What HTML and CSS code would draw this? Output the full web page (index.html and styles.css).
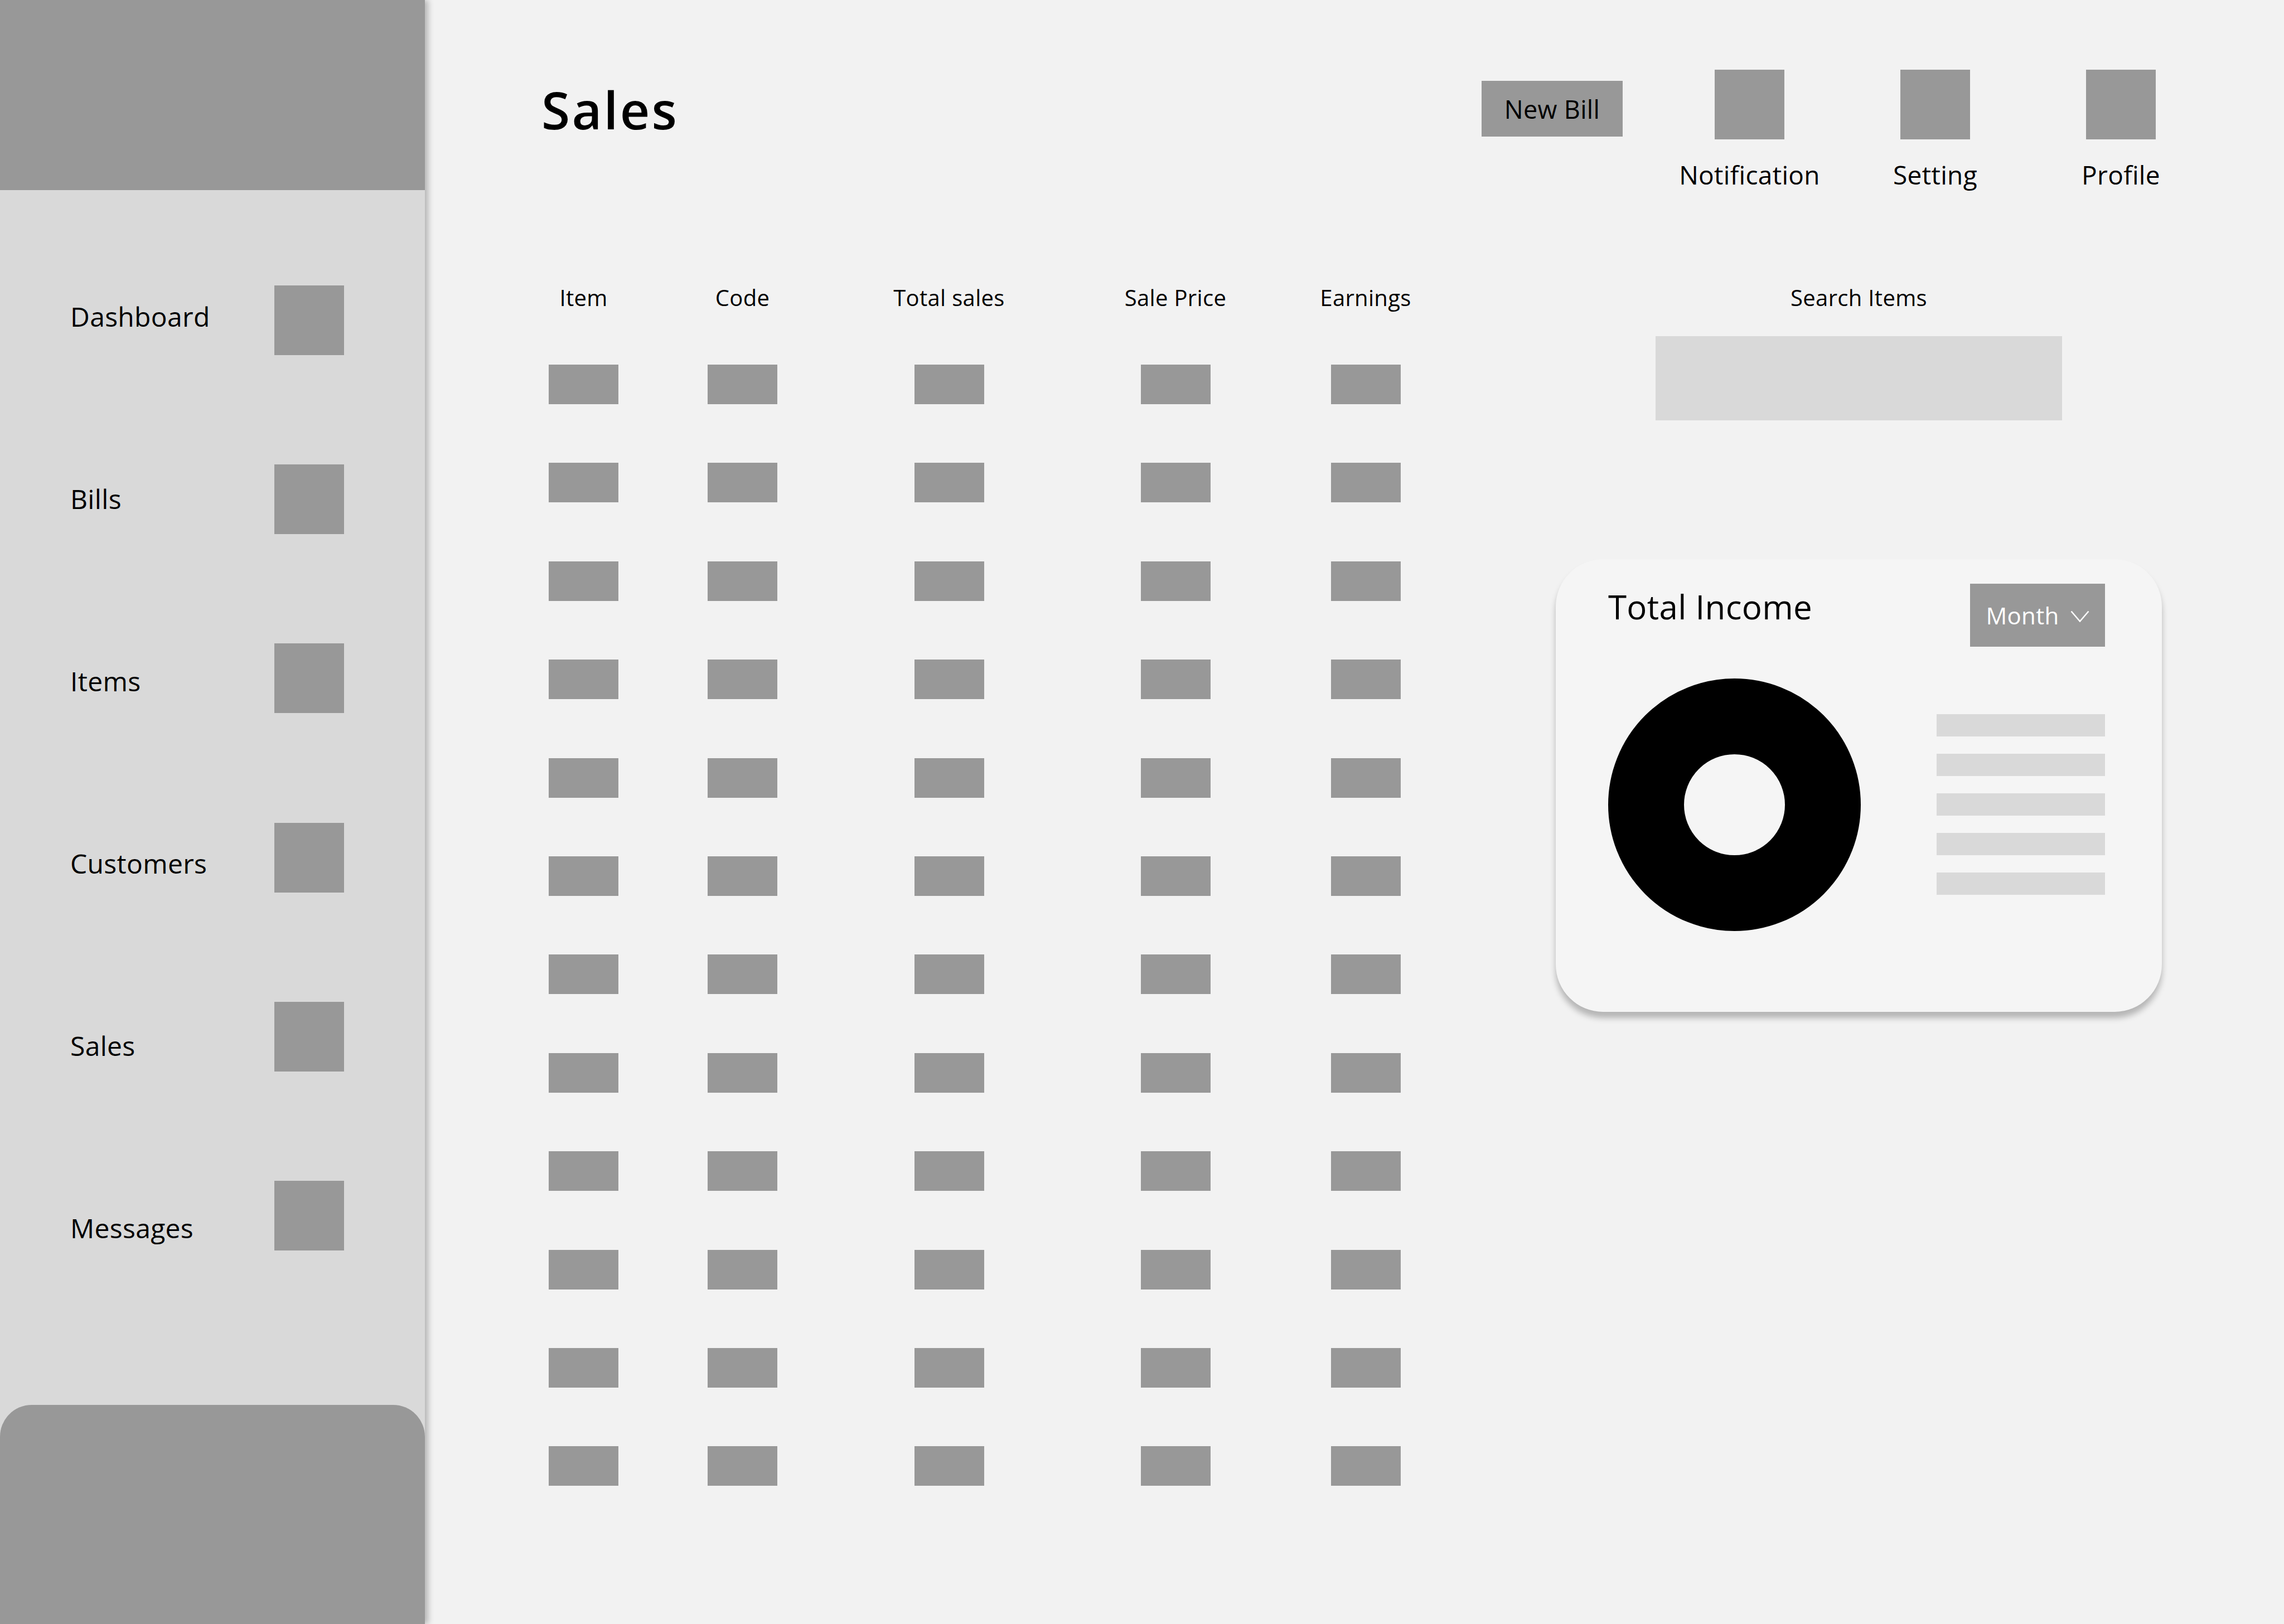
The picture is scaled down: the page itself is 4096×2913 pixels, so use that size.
FILE: index.html
```html
<!DOCTYPE html>
<html lang="en">
<head>
<meta charset="utf-8">
<title>Sales</title>
<link rel="stylesheet" href="styles.css">
</head>
<body>
<div class="app">
  <aside class="sidebar">
    <div class="brand"></div>
    <nav class="nav">
      <ul class="nav-labels">
        <li>Dashboard</li>
        <li>Bills</li>
        <li>Items</li>
        <li>Customers</li>
        <li>Sales</li>
        <li>Messages</li>
      </ul>
      <div class="nav-icons">
        <span class="nav-icon"></span>
        <span class="nav-icon"></span>
        <span class="nav-icon"></span>
        <span class="nav-icon"></span>
        <span class="nav-icon"></span>
        <span class="nav-icon"></span>
      </div>
    </nav>
    <div class="sidebar-footer"></div>
  </aside>

  <main class="main">
    <header class="topbar">
      <h1 class="page-title">Sales</h1>
      <div class="actions">
        <button class="btn-new" type="button">New Bill</button>
        <div class="action"><span class="action-icon"></span><span class="action-label">Notification</span></div>
        <div class="action"><span class="action-icon"></span><span class="action-label">Setting</span></div>
        <div class="action"><span class="action-icon"></span><span class="action-label">Profile</span></div>
      </div>
    </header>

    <section class="content">
      <div class="sales-table">
        <div class="th">Item</div>
        <div class="th">Code</div>
        <div class="th">Total sales</div>
        <div class="th">Sale Price</div>
        <div class="th">Earnings</div>
        <div class="td"></div><div class="td"></div><div class="td"></div><div class="td"></div><div class="td"></div>
        <div class="td"></div><div class="td"></div><div class="td"></div><div class="td"></div><div class="td"></div>
        <div class="td"></div><div class="td"></div><div class="td"></div><div class="td"></div><div class="td"></div>
        <div class="td"></div><div class="td"></div><div class="td"></div><div class="td"></div><div class="td"></div>
        <div class="td"></div><div class="td"></div><div class="td"></div><div class="td"></div><div class="td"></div>
        <div class="td"></div><div class="td"></div><div class="td"></div><div class="td"></div><div class="td"></div>
        <div class="td"></div><div class="td"></div><div class="td"></div><div class="td"></div><div class="td"></div>
        <div class="td"></div><div class="td"></div><div class="td"></div><div class="td"></div><div class="td"></div>
        <div class="td"></div><div class="td"></div><div class="td"></div><div class="td"></div><div class="td"></div>
        <div class="td"></div><div class="td"></div><div class="td"></div><div class="td"></div><div class="td"></div>
        <div class="td"></div><div class="td"></div><div class="td"></div><div class="td"></div><div class="td"></div>
        <div class="td"></div><div class="td"></div><div class="td"></div><div class="td"></div><div class="td"></div>
      </div>

      <aside class="side">
        <div class="search-label">Search Items</div>
        <div class="search-box"></div>
        <div class="income-card">
          <div class="card-head">
            <h2 class="card-title">Total Income</h2>
            <button class="month-btn" type="button">Month
              <svg class="chevron" width="34" height="21" viewBox="0 0 34 21"><polyline points="1.5,1.5 17,19.5 32.5,1.5" fill="none" stroke="#fff" stroke-width="2.5"/></svg>
            </button>
          </div>
          <div class="card-body">
            <div class="donut"></div>
            <ul class="legend">
              <li></li><li></li><li></li><li></li><li></li>
            </ul>
          </div>
        </div>
      </aside>
    </section>
  </main>
</div>
</body>
</html>
```

FILE: styles.css
```css
* { box-sizing: border-box; margin: 0; padding: 0; }

body {
  margin: 0;
  background: #f2f2f2;
  font-family: "Open Sans", "Noto Sans", sans-serif;
  letter-spacing: 0.02em;
  color: #000;
}

.app {
  display: flex;
  width: 4096px;
  height: 2913px;
  overflow: hidden;
}

/* Sidebar */
.sidebar {
  width: 762px;
  flex: none;
  background: #d9d9d9;
  display: flex;
  flex-direction: column;
  box-shadow: 6px 0 10px rgba(0, 0, 0, 0.25);
  position: relative;
  z-index: 1;
}

.brand {
  height: 341px;
  background: #989898;
}

.nav {
  display: flex;
  padding-left: 126px;
}

.nav-labels {
  list-style: none;
  display: flex;
  flex-direction: column;
  gap: 279px;
  padding-top: 203px;
  width: 366px;
  font-size: 48px;
  line-height: 48px;
}

.nav-icons {
  display: flex;
  flex-direction: column;
  gap: 196.2px;
  padding-top: 171px;
}

.nav-icon {
  display: block;
  width: 125px;
  height: 125px;
  background: #989898;
}

.sidebar-footer {
  margin-top: auto;
  height: 393px;
  background: #989898;
  border-radius: 57px 57px 0 0;
}

/* Main */
.main {
  flex: 1;
  display: flex;
  flex-direction: column;
  padding-left: 184px;
}

.topbar {
  display: flex;
  justify-content: space-between;
  align-items: flex-start;
  padding-top: 125px;
  padding-right: 126px;
}

.page-title {
  font-size: 93px;
  line-height: 93px;
  font-weight: 600;
  letter-spacing: 0.035em;
  margin-top: 25px;
  padding-left: 25px;
}

.actions {
  display: flex;
  align-items: flex-start;
}

.btn-new {
  width: 253px;
  height: 100px;
  margin-top: 20px;
  margin-right: 61px;
  background: #989898;
  border: none;
  font-family: inherit;
  letter-spacing: inherit;
  font-size: 45px;
  color: #000;
}

.action {
  width: 333px;
  display: flex;
  flex-direction: column;
  align-items: center;
}

.action-icon {
  display: block;
  width: 125px;
  height: 125px;
  background: #989898;
}

.action-label {
  margin-top: 40px;
  font-size: 46px;
  line-height: 46px;
}

/* Content */
.content {
  display: flex;
  align-items: flex-start;
  margin-top: 141.6px;
}

.sales-table {
  display: grid;
  grid-template-columns: 201px 369px 372px 440px 242px;
  grid-auto-rows: 71px;
  row-gap: 105.4px;
  justify-items: center;
}

.th {
  font-size: 40px;
  line-height: 40px;
  padding-top: 36px;
  white-space: nowrap;
}

.td {
  width: 125px;
  height: 71px;
  background: #989898;
}

.side {
  width: 1087px;
  margin-left: auto;
  margin-right: 219px;
  display: flex;
  flex-direction: column;
  align-items: center;
}

.search-label {
  font-size: 40px;
  line-height: 40px;
  padding-top: 36px;
}

.search-box {
  margin-top: 49px;
  width: 729px;
  height: 151px;
  background: #d9d9d9;
}

.income-card {
  margin-top: 249px;
  width: 1087px;
  height: 812px;
  background: #f5f5f5;
  border-radius: 85px;
  box-shadow: 0 11px 11px rgba(0, 0, 0, 0.25);
  padding: 44px 102px 0 94px;
}

.card-head {
  display: flex;
  justify-content: space-between;
  align-items: flex-start;
}

.card-title {
  font-size: 60px;
  line-height: 60px;
  font-weight: 400;
  margin-top: 11px;
}

.month-btn {
  width: 242px;
  height: 113px;
  background: #989898;
  color: #fff;
  border: none;
  display: flex;
  align-items: center;
  justify-content: center;
  gap: 20px;
  font-family: inherit;
  letter-spacing: inherit;
  font-size: 42px;
}

.chevron {
  display: block;
  margin-top: 4px;
}

.card-body {
  display: flex;
  justify-content: space-between;
  align-items: center;
  margin-top: 57px;
}

.donut {
  width: 453px;
  height: 453px;
  border-radius: 50%;
  border: 136.5px solid #000;
}

.legend {
  list-style: none;
  display: flex;
  flex-direction: column;
  gap: 31px;
}

.legend li {
  width: 302px;
  height: 40px;
  background: #d9d9d9;
}
```
